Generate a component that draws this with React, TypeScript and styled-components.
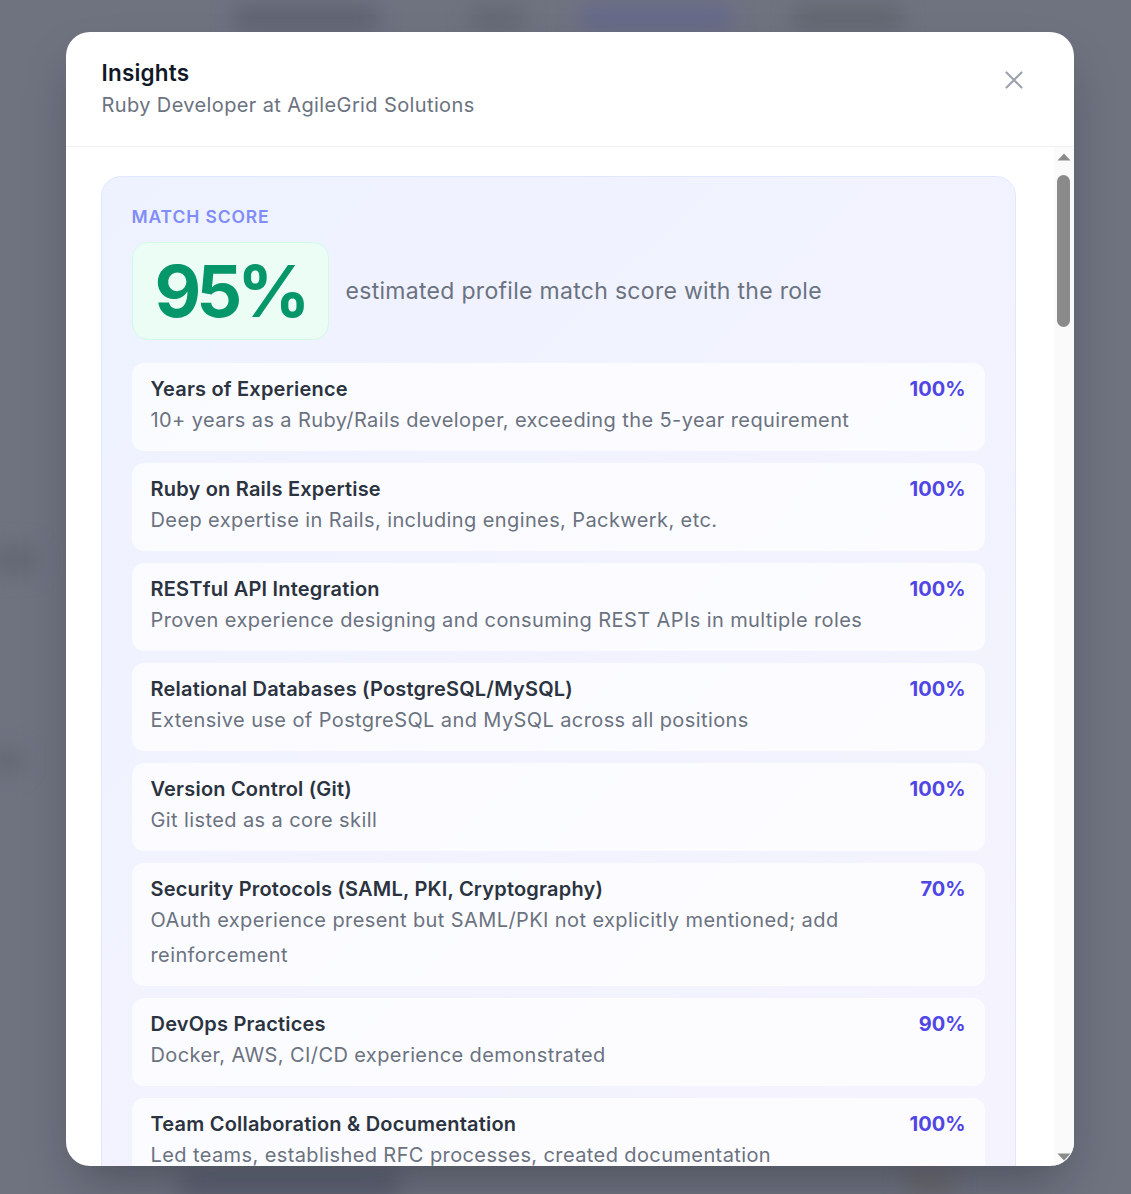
import React from 'react'
import styled, { createGlobalStyle } from 'styled-components'

const GlobalStyle = createGlobalStyle`
  html, body {
    margin: 0;
    padding: 0;
    height: 100%;
    overflow: hidden;
  }
  body {
    font-family: Inter, "Noto Sans", "Liberation Sans", sans-serif;
    background: #6f7380;
  }
  * {
    box-sizing: border-box;
  }
`

type MatchItem = {
  title: string
  detail: string
  score: number
}

type NoteSection = {
  heading: string
  notes: string[]
}

const matchItems: MatchItem[] = [
  {
    title: 'Years of Experience',
    detail: '10+ years as a Ruby/Rails developer, exceeding the 5-year requirement',
    score: 100
  },
  {
    title: 'Ruby on Rails Expertise',
    detail: 'Deep expertise in Rails, including engines, Packwerk, etc.',
    score: 100
  },
  {
    title: 'RESTful API Integration',
    detail: 'Proven experience designing and consuming REST APIs in multiple roles',
    score: 100
  },
  {
    title: 'Relational Databases (PostgreSQL/MySQL)',
    detail: 'Extensive use of PostgreSQL and MySQL across all positions',
    score: 100
  },
  {
    title: 'Version Control (Git)',
    detail: 'Git listed as a core skill',
    score: 100
  },
  {
    title: 'Security Protocols (SAML, PKI, Cryptography)',
    detail: 'OAuth experience present but SAML/PKI not explicitly mentioned; add reinforcement',
    score: 70
  },
  {
    title: 'DevOps Practices',
    detail: 'Docker, AWS, CI/CD experience demonstrated',
    score: 90
  },
  {
    title: 'Team Collaboration & Documentation',
    detail: 'Led teams, established RFC processes, created documentation',
    score: 100
  },
  {
    title: 'Testing Culture (RSpec/Minitest)',
    detail: 'Comprehensive test suites and TDD practice described in two recent roles',
    score: 95
  },
  {
    title: 'Background Jobs (Sidekiq)',
    detail: 'Built and tuned Sidekiq pipelines processing millions of jobs per day',
    score: 100
  },
  {
    title: 'Frontend Familiarity (Hotwire/React)',
    detail: 'Hotwire and React mentioned; depth of frontend work could be clearer',
    score: 80
  }
]

const noteSections: NoteSection[] = [
  {
    heading: 'Key Strengths',
    notes: [
      'Long track record shipping and maintaining large Rails monoliths in production',
      'Modularised a legacy codebase with engines and Packwerk, reducing coupling between teams',
      'Designed public REST APIs with versioning, pagination and rate limiting',
      'Owned PostgreSQL performance work: indexing, query plans and safe migrations',
      'Mentored engineers and introduced an RFC process for architectural decisions',
      'Comfortable across the delivery pipeline, from Docker images to AWS deployments'
    ]
  },
  {
    heading: 'Gaps to Address',
    notes: [
      'SAML and PKI are named in the posting but not on the resume; describe any SSO or certificate work',
      'Cryptography experience is implied by OAuth work only; mention encryption at rest or key rotation if applicable',
      'Compliance frameworks (SOC 2, ISO 27001) are not referenced',
      'Quantify the impact of DevOps improvements such as build time or deploy frequency'
    ]
  },
  {
    heading: 'Resume Suggestions',
    notes: [
      'Add a bullet on single sign-on integrations, naming SAML providers if you have used them',
      'Move the Packwerk modularisation project higher in the most recent role',
      'Include the size of the datasets and traffic behind your PostgreSQL work',
      'Group security-related work in one bullet so it is easy to scan',
      'Mention the number of engineers you led and the outcome of the RFC process',
      'Trim older roles to two bullets each to make room for the above'
    ]
  },
  {
    heading: 'Recent Experience Highlights',
    notes: [
      'Split a 400k-line Rails monolith into packages with enforced boundaries',
      'Cut p95 API latency by 60% through query tuning and caching',
      'Moved CI from 40 to 12 minutes with parallel test runs',
      'Introduced feature flags and gradual rollouts for risky releases',
      'Ran the on-call rotation and wrote the incident review template',
      'Led a team of five engineers through a major Rails upgrade'
    ]
  },
  {
    heading: 'Interview Talking Points',
    notes: [
      'Walk through a Rails engine you extracted: why, how it was tested and how boundaries were enforced',
      'Explain how you would add SAML-based SSO to an existing Devise setup and what you would verify',
      'Describe a production incident involving the database and how you found the root cause',
      'Talk about how you review API designs and keep them backwards compatible',
      'Share an example of documentation you wrote that changed how a team worked',
      'Describe your approach to zero-downtime deploys and long-running migrations',
      'Explain how you size and monitor Sidekiq queues under bursty load'
    ]
  },
  {
    heading: 'Questions to Ask',
    notes: [
      'How is authentication and identity handled across AgileGrid products today?',
      'Which parts of the codebase carry the most technical debt, and is there time set aside for it?',
      'How are architectural decisions proposed and recorded?',
      'What does the deployment pipeline look like, and how often does the team release?',
      'How does the team split work between product features and platform improvements?'
    ]
  },
  {
    heading: 'Learning Plan',
    notes: [
      'Read the SAML 2.0 technical overview and set up a test identity provider',
      'Build a small Rails app that signs in through SAML using ruby-saml',
      'Review X.509 certificates, chains of trust and certificate rotation',
      'Practice explaining symmetric and asymmetric encryption with real examples',
      'Summarise what you learned in a short write-up you can share in interviews'
    ]
  },
  {
    heading: 'Cover Letter Notes',
    notes: [
      'Open with the Rails modularisation work, since it maps directly to the scale AgileGrid describes in the posting and shows you can improve a codebase while features keep shipping.',
      'Follow with API and database experience in one paragraph, naming the systems and the load they handled.',
      'Address security directly: describe the OAuth work in detail and state plainly that you are ready to take on SAML and PKI, with any related study or side projects you have done.',
      'Close with the collaboration story about the RFC process and documentation, and link it to the team culture AgileGrid highlights on its careers page.'
    ]
  }
]

// Blurred page sitting behind the dialog overlay
const Backdrop = styled.div`
  position: fixed;
  inset: 0;
  background: #6f7380;
  overflow: hidden;
`

const BackdropBlob = styled.div<{ $tone: string }>`
  position: absolute;
  border-radius: 14px;
  background: ${({ $tone }) => $tone};
  filter: blur(10px);
`

const Overlay = styled.div`
  position: fixed;
  inset: 0;
  display: flex;
  justify-content: center;
  align-items: flex-start;
  padding: 32px 0 0 8px;
`

const Dialog = styled.div`
  width: 1008px;
  height: 1134px;
  background: #ffffff;
  border-radius: 24px;
  box-shadow: 0 25px 50px -12px rgba(15, 18, 30, 0.35);
  display: flex;
  flex-direction: column;
  overflow: hidden;
`

const Header = styled.header`
  display: flex;
  justify-content: space-between;
  align-items: flex-start;
  padding: 24px 45px 26px 36px;
  border-bottom: 1px solid #f1f1f4;
`

const HeadingGroup = styled.div`
  display: flex;
  flex-direction: column;
`

const Title = styled.h2`
  margin: 0;
  font-size: 22.5px;
  line-height: 34px;
  font-weight: 600;
  letter-spacing: 0.2px;
  color: #111827;
`

const Subtitle = styled.p`
  margin: 0;
  font-size: 20px;
  line-height: 30px;
  letter-spacing: 0.38px;
  color: #6b7280;
`

const CloseButton = styled.button`
  margin-top: 9px;
  width: 30px;
  height: 30px;
  padding: 0;
  border: none;
  background: transparent;
  color: #9ca3af;
  cursor: pointer;
  display: flex;
  align-items: center;
  justify-content: center;
`

const Body = styled.div`
  flex: 1;
  min-height: 0;
  display: flex;
`

const Viewport = styled.div`
  flex: 1;
  overflow-y: auto;
  scrollbar-width: none;
  padding: 29px 38px 36px 35px;

  &::-webkit-scrollbar {
    display: none;
  }
`

// Classic scrollbar rail: arrow buttons and a rounded thumb
const ScrollRail = styled.div`
  width: 20px;
  flex-shrink: 0;
  background: #fafafa;
  display: flex;
  flex-direction: column;
`

const RailButton = styled.div`
  height: 19px;
  display: flex;
  align-items: center;
  justify-content: center;
  color: #8a8a8a;
`

const RailTrack = styled.div`
  flex: 1;
  display: flex;
  flex-direction: column;
  align-items: center;
`

const RailThumb = styled.div<{ $size: number }>`
  margin-top: 9px;
  width: 13px;
  height: ${({ $size }) => $size}px;
  border-radius: 7px;
  background: #8a8a8a;
`

const Panel = styled.section`
  border: 1px solid #e0e7ff;
  border-radius: 20px;
  background: linear-gradient(135deg, #eef2ff 0%, #f3f3fe 60%, #f6f4fe 100%);
  padding: 29px 30px 30px 30px;
  margin-bottom: 30px;
`

const Eyebrow = styled.div`
  font-size: 17.5px;
  line-height: 21px;
  font-weight: 600;
  letter-spacing: 0.05em;
  text-transform: uppercase;
  color: #818cf8;
  margin-bottom: 15px;
`

const ScoreRow = styled.div`
  display: flex;
  align-items: center;
  gap: 17px;
  margin-bottom: 23px;
`

const ScoreBadge = styled.div`
  width: 197px;
  height: 98px;
  display: flex;
  align-items: center;
  justify-content: center;
  border: 1px solid #d1fae5;
  border-radius: 16px;
  background: #ecfdf5;
  color: #059669;
  font-size: 72px;
  font-weight: 700;
  letter-spacing: -5px;
  line-height: 1;
`

const ScoreCaption = styled.span`
  font-size: 23px;
  letter-spacing: 0.3px;
  color: #6b7280;
`

const ItemList = styled.div`
  display: flex;
  flex-direction: column;
  gap: 12px;
`

const Item = styled.div`
  background: rgba(255, 255, 255, 0.7);
  border-radius: 12px;
  padding: 14px 19px 13px 19px;
`

const ItemHead = styled.div`
  display: flex;
  justify-content: space-between;
  align-items: flex-start;
  gap: 24px;
`

const ItemTitle = styled.div`
  font-size: 20px;
  line-height: 24px;
  font-weight: 600;
  letter-spacing: 0.2px;
  color: #2b3340;
`

const ItemScore = styled.div`
  font-size: 20px;
  line-height: 24px;
  font-weight: 700;
  color: #4f46e5;
  white-space: nowrap;
`

const ItemDetail = styled.p`
  margin: 2px 0 0 0;
  max-width: 720px;
  font-size: 20px;
  line-height: 35px;
  letter-spacing: 0.4px;
  color: #6b7280;
`

const NoteCard = styled.section`
  border: 1px solid #eceef3;
  border-radius: 20px;
  background: #fbfbfd;
  padding: 28px 30px;
  margin-bottom: 30px;
`

const SectionHeading = styled.h3`
  margin: 0 0 18px 0;
  font-size: 20px;
  line-height: 28px;
  font-weight: 600;
  color: #2b3340;
`

const NoteList = styled.ul`
  margin: 0;
  padding: 0 0 0 22px;
  display: flex;
  flex-direction: column;
  gap: 12px;
`

const Note = styled.li`
  font-size: 20px;
  line-height: 35px;
  letter-spacing: 0.4px;
  color: #4b5563;
`

const CloseIcon = () => (
  <svg width="30" height="30" viewBox="0 0 24 24" fill="none" stroke="currentColor" strokeWidth="1.7" strokeLinecap="round">
    <path d="M6 6l12 12M18 6L6 18" />
  </svg>
)

const RailArrow = ({ up }: { up?: boolean }) => (
  <svg width="14" height="8" viewBox="0 0 14 8" fill="currentColor">
    {up ? <path d="M7 0.5L13.5 7.5H0.5Z" /> : <path d="M7 7.5L13.5 0.5H0.5Z" />}
  </svg>
)

const App = () => {
  return (
    <>
      <GlobalStyle />
      <Backdrop>
        <BackdropBlob $tone="#5f6370" style={{ left: 232, top: 6, width: 148, height: 24 }} />
        <BackdropBlob $tone="#646874" style={{ left: 468, top: 6, width: 58, height: 24 }} />
        <BackdropBlob $tone="#66698a" style={{ left: 578, top: 4, width: 156, height: 28 }} />
        <BackdropBlob $tone="#62666f" style={{ left: 792, top: 6, width: 112, height: 24 }} />
        <BackdropBlob $tone="#646873" style={{ left: -10, top: 545, width: 48, height: 30 }} />
        <BackdropBlob $tone="#646873" style={{ left: -10, top: 748, width: 34, height: 26 }} />
        <BackdropBlob $tone="#6b6a70" style={{ left: 905, top: 1168, width: 50, height: 30 }} />
        <BackdropBlob $tone="#5d6272" style={{ left: 180, top: 1170, width: 220, height: 30 }} />
      </Backdrop>
      <Overlay>
        <Dialog role="dialog" aria-label="Insights">
          <Header>
            <HeadingGroup>
              <Title>Insights</Title>
              <Subtitle>Ruby Developer at AgileGrid Solutions</Subtitle>
            </HeadingGroup>
            <CloseButton aria-label="Close">
              <CloseIcon />
            </CloseButton>
          </Header>
          <Body>
            <Viewport>
              <Panel>
                <Eyebrow>Match Score</Eyebrow>
                <ScoreRow>
                  <ScoreBadge>95%</ScoreBadge>
                  <ScoreCaption>estimated profile match score with the role</ScoreCaption>
                </ScoreRow>
                <ItemList>
                  {matchItems.map((item) => (
                    <Item key={item.title}>
                      <ItemHead>
                        <ItemTitle>{item.title}</ItemTitle>
                        <ItemScore>{item.score}%</ItemScore>
                      </ItemHead>
                      <ItemDetail>{item.detail}</ItemDetail>
                    </Item>
                  ))}
                </ItemList>
              </Panel>
              {noteSections.map((section) => (
                <NoteCard key={section.heading}>
                  <SectionHeading>{section.heading}</SectionHeading>
                  <NoteList>
                    {section.notes.map((note) => (
                      <Note key={note}>{note}</Note>
                    ))}
                  </NoteList>
                </NoteCard>
              ))}
            </Viewport>
            <ScrollRail aria-hidden="true">
              <RailButton>
                <RailArrow up />
              </RailButton>
              <RailTrack>
                <RailThumb $size={152} />
              </RailTrack>
              <RailButton>
                <RailArrow />
              </RailButton>
            </ScrollRail>
          </Body>
        </Dialog>
      </Overlay>
    </>
  )
}

export default App
